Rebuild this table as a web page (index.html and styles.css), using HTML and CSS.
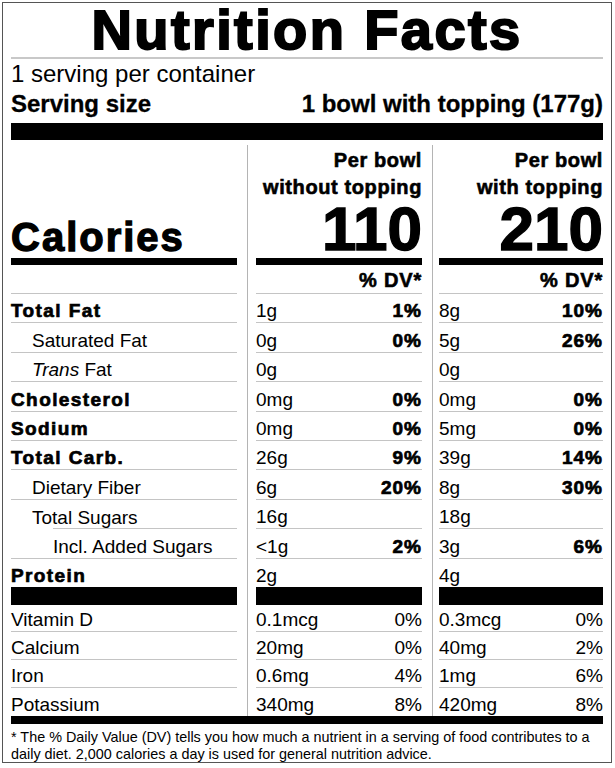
FILE: index.html
```html
<!DOCTYPE html>
<html lang="en">
<head>
<meta charset="utf-8">
<title>Nutrition Facts</title>
<link rel="stylesheet" href="styles.css">
</head>
<body>
<div class="label">
  <h1 class="title">Nutrition Facts</h1>
  <div class="servings">1 serving per container</div>
  <div class="serving-size"><span>Serving size</span><span>1 bowl with topping (177g)</span></div>
  <div class="bar-thick"></div>

  <div class="facts">
    <div class="divider d1"></div>
    <div class="divider d2"></div>

    <div class="cell head-left"><span class="calories">Calories</span></div>
    <div class="cell head"><div class="per">Per bowl</div><div class="per">without topping</div><div class="cal-num">110</div></div>
    <div class="cell head"><div class="per">Per bowl</div><div class="per">with topping</div><div class="cal-num">210</div></div>

    <div class="cell row"></div>
    <div class="cell row dvh">% DV*</div>
    <div class="cell row dvh">% DV*</div>

    <div class="cell row name b">Total Fat</div>
    <div class="cell row"><span>1g</span><b>1%</b></div>
    <div class="cell row"><span>8g</span><b>10%</b></div>

    <div class="cell row name ind1">Saturated Fat</div>
    <div class="cell row"><span>0g</span><b>0%</b></div>
    <div class="cell row"><span>5g</span><b>26%</b></div>

    <div class="cell row name ind1"><span><i>Trans</i> Fat</span></div>
    <div class="cell row"><span>0g</span></div>
    <div class="cell row"><span>0g</span></div>

    <div class="cell row name b">Cholesterol</div>
    <div class="cell row"><span>0mg</span><b>0%</b></div>
    <div class="cell row"><span>0mg</span><b>0%</b></div>

    <div class="cell row name b">Sodium</div>
    <div class="cell row"><span>0mg</span><b>0%</b></div>
    <div class="cell row"><span>5mg</span><b>0%</b></div>

    <div class="cell row name b">Total Carb.</div>
    <div class="cell row"><span>26g</span><b>9%</b></div>
    <div class="cell row"><span>39g</span><b>14%</b></div>

    <div class="cell row name ind1">Dietary Fiber</div>
    <div class="cell row"><span>6g</span><b>20%</b></div>
    <div class="cell row"><span>8g</span><b>30%</b></div>

    <div class="cell row name ind1 sugars">Total Sugars</div>
    <div class="cell row"><span>16g</span></div>
    <div class="cell row"><span>18g</span></div>

    <div class="cell row name ind2">Incl. Added Sugars</div>
    <div class="cell row"><span>&lt;1g</span><b>2%</b></div>
    <div class="cell row"><span>3g</span><b>6%</b></div>

    <div class="cell row last name b">Protein</div>
    <div class="cell row last"><span>2g</span></div>
    <div class="cell row last"><span>4g</span></div>

    <div class="cell black"></div>
    <div class="cell black"></div>
    <div class="cell black"></div>

    <div class="cell row vit name">Vitamin D</div>
    <div class="cell row vit"><span>0.1mcg</span><span>0%</span></div>
    <div class="cell row vit"><span>0.3mcg</span><span>0%</span></div>

    <div class="cell row vit name">Calcium</div>
    <div class="cell row vit"><span>20mg</span><span>0%</span></div>
    <div class="cell row vit"><span>40mg</span><span>2%</span></div>

    <div class="cell row vit name">Iron</div>
    <div class="cell row vit"><span>0.6mg</span><span>4%</span></div>
    <div class="cell row vit"><span>1mg</span><span>6%</span></div>

    <div class="cell row vit last name">Potassium</div>
    <div class="cell row vit last"><span>340mg</span><span>8%</span></div>
    <div class="cell row vit last"><span>420mg</span><span>8%</span></div>
  </div>

  <div class="bar-mid"></div>
  <p class="foot">* The % Daily Value (DV) tells you how much a nutrient in a serving of food contributes to a daily diet. 2,000 calories a day is used for general nutrition advice.</p>
</div>
</body>
</html>
```

FILE: styles.css
```css
* { box-sizing: border-box; }

body {
  margin: 0;
  background: #fff;
  color: #000;
  font-family: "Liberation Sans", Arial, sans-serif;
}

.label {
  margin: 2px;
  width: 610px;
  height: 761px;
  border: 1px solid #555;
  padding: 0 8px;
}

.title {
  margin: 0;
  padding-top: 2px;
  padding-bottom: 2px;
  font-size: 56px;
  font-weight: 700;
  line-height: 50px;
  letter-spacing: 2.4px;
  -webkit-text-stroke: 2px #000;
  text-align: center;
  border-bottom: 2px solid #c8c8c8;
}

.servings {
  font-size: 24px;
  line-height: 28px;
  margin-top: 1px;
}

.serving-size {
  display: flex;
  justify-content: space-between;
  font-size: 24px;
  font-weight: 700;
  line-height: 28px;
  margin-top: 2px;
  -webkit-text-stroke: 0.3px #000;
}

.bar-thick {
  height: 17px;
  background: #000;
  margin-top: 5px;
}

.facts {
  display: grid;
  grid-template-columns: 226px 19px 166px 17px 164px;
  grid-template-rows: 120px 29px repeat(9, 29.4px) 28px 18px repeat(4, 27.75px);
  margin-top: 5px;
}

.divider {
  grid-row: 1 / -1;
  width: 1px;
  background: #b4b4b4;
  justify-self: start;
  margin-left: 10px;
}
.d1 { grid-column: 2; }
.d2 { grid-column: 4; }

.cell { min-width: 0; }

.head-left {
  display: flex;
  align-items: flex-end;
  border-bottom: 7px solid #000;
  padding-bottom: 1px;
}

.calories {
  font-size: 40px;
  font-weight: 700;
  line-height: 40px;
  letter-spacing: 2px;
  -webkit-text-stroke: 1.3px #000;
}

.head {
  display: flex;
  flex-direction: column;
  justify-content: flex-end;
  align-items: flex-end;
  border-bottom: 7px solid #000;
}

.per {
  font-size: 20px;
  font-weight: 700;
  line-height: 27px;
  letter-spacing: 0.6px;
  -webkit-text-stroke: 0.6px #000;
}

.cal-num {
  font-size: 62px;
  font-weight: 700;
  line-height: 56px;
  margin-bottom: 1px;
  -webkit-text-stroke: 1.4px #000;
}

.row {
  display: flex;
  align-items: flex-end;
  justify-content: space-between;
  border-bottom: 1px solid #c4c4c4;
  font-size: 19px;
  line-height: 20px;
  padding-bottom: 1px;
}

.row b {
  font-size: 19px;
  letter-spacing: 1px;
  -webkit-text-stroke: 0.7px #000;
}

.dvh {
  justify-content: flex-end;
  font-weight: 700;
  font-size: 20px;
  letter-spacing: 0.8px;
  padding-bottom: 3px;
  -webkit-text-stroke: 0.6px #000;
}

.name.b {
  font-weight: 700;
  font-size: 19px;
  letter-spacing: 1.4px;
  -webkit-text-stroke: 0.7px #000;
}

.ind1 { padding-left: 21px; }
.ind2 { padding-left: 42px; }

.sugars {
  border-bottom: none;
  background: linear-gradient(#c4c4c4, #c4c4c4) no-repeat 42px 100% / calc(100% - 42px) 1px;
}

.row.last { border-bottom: none; }

.black { background: #000; }

.bar-mid {
  height: 8px;
  background: #000;
}

.foot {
  margin: 5px 0 0;
  font-size: 14.4px;
  line-height: 17px;
}
```
